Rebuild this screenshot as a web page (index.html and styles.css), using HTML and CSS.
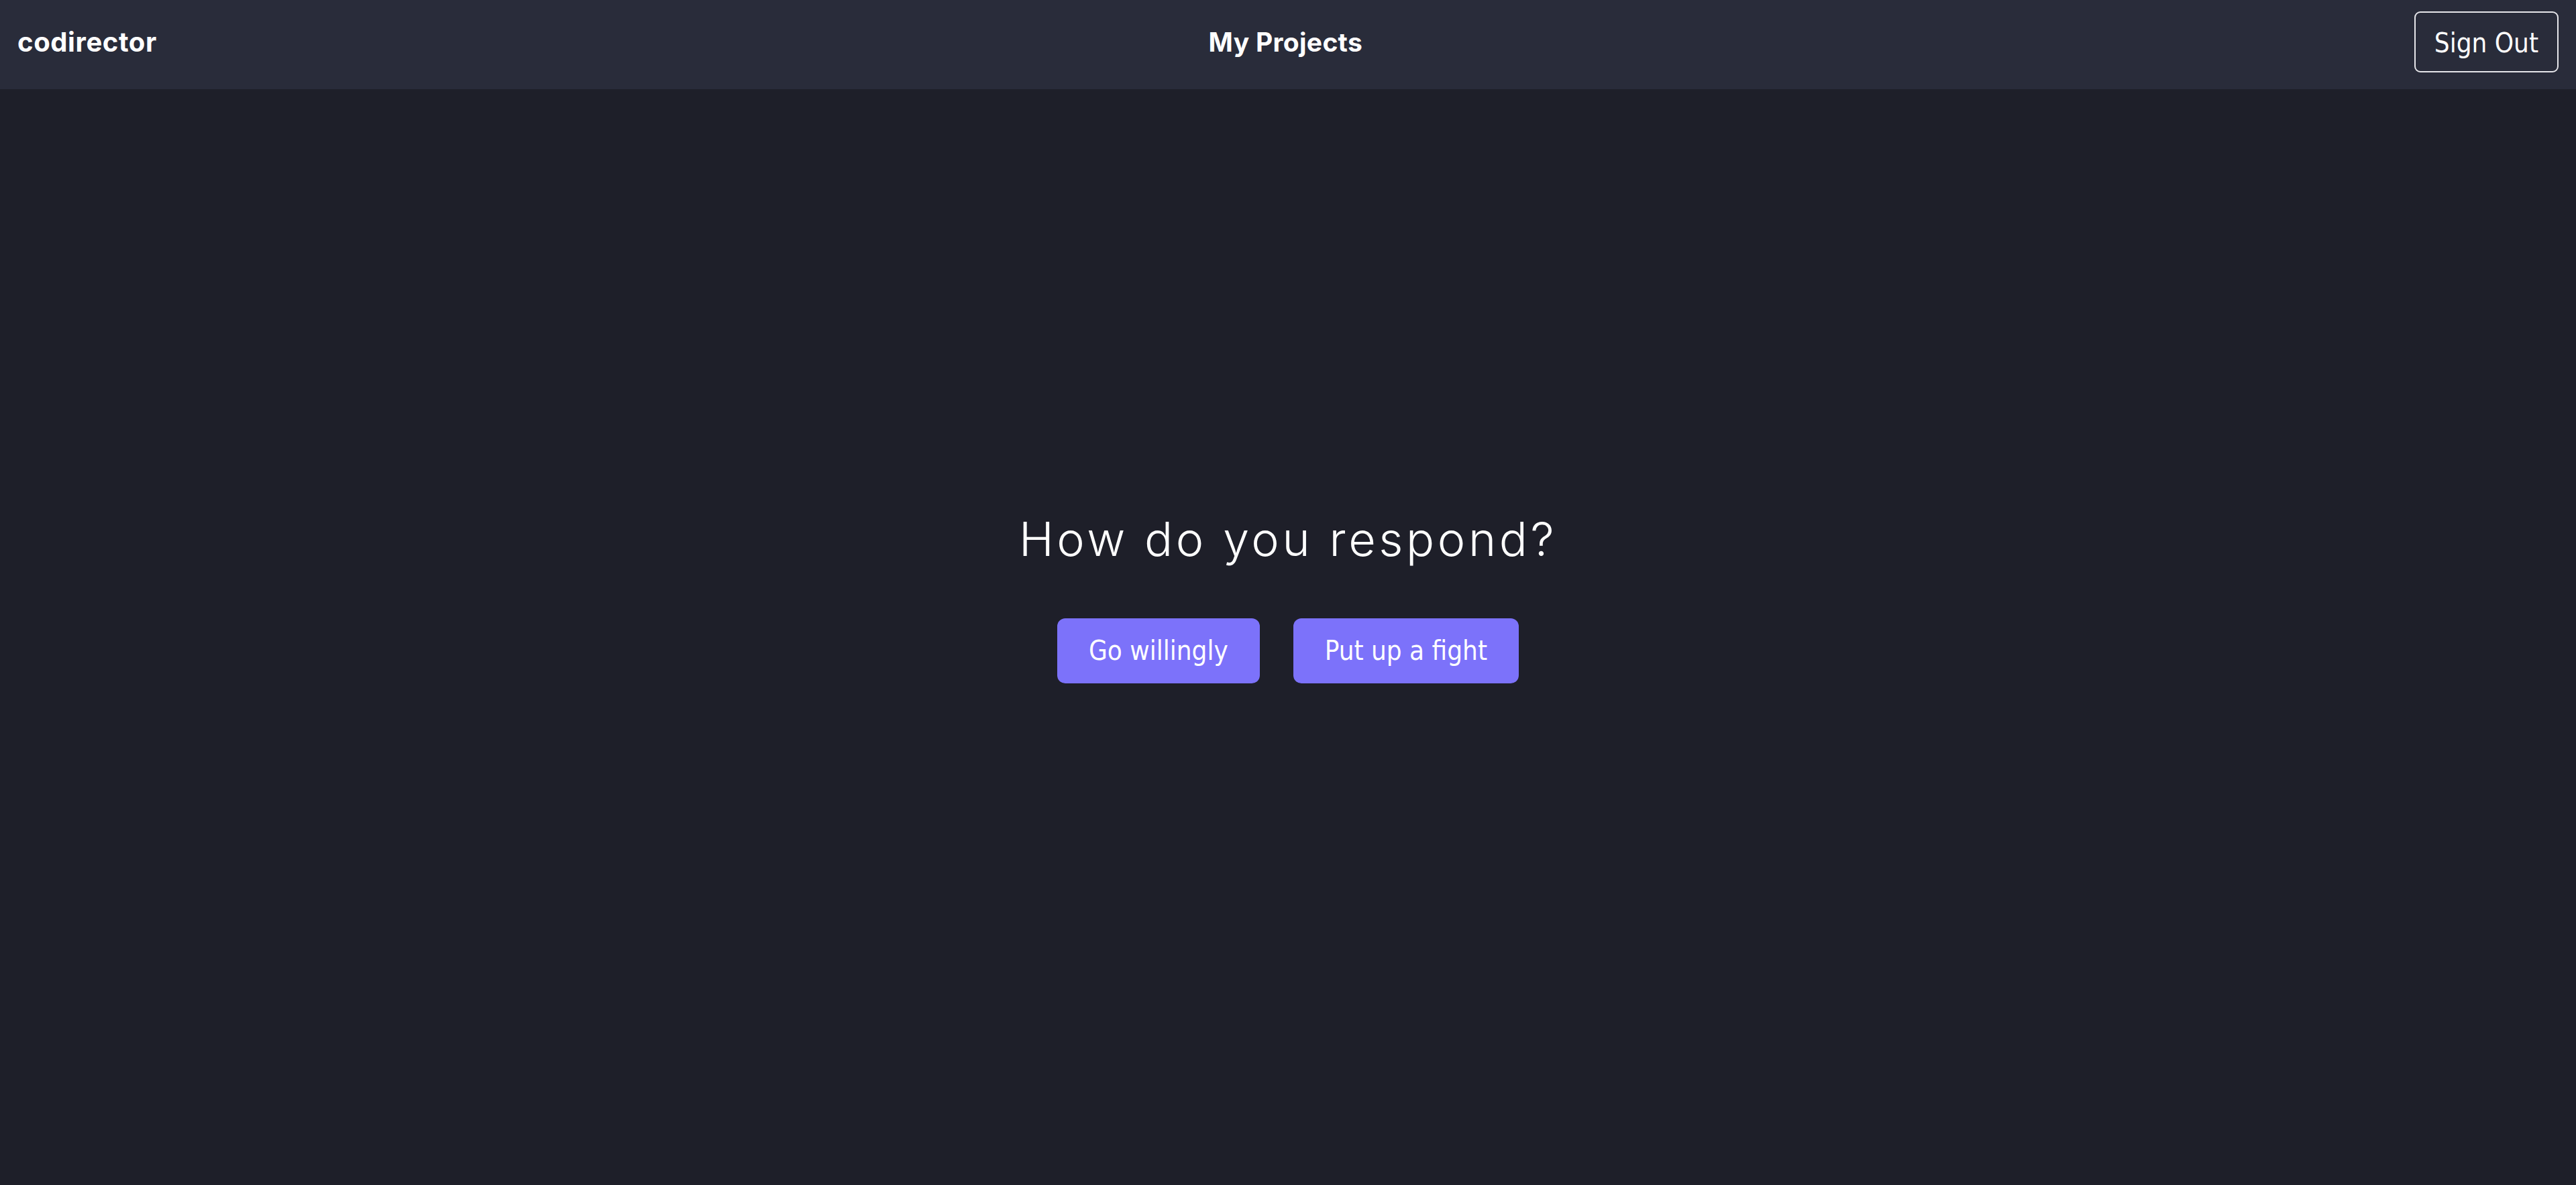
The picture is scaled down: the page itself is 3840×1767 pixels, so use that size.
FILE: index.html
```html
<!DOCTYPE html>
<html lang="en">
<head>
<meta charset="utf-8">
<title>codirector</title>
<link rel="stylesheet" href="styles.css">
</head>
<body>
<header class="topbar">
  <div class="brand">codirector</div>
  <div class="page-title">My Projects</div>
  <button class="signout">Sign Out</button>
</header>
<main class="stage">
  <h1 class="prompt">How do you respond?</h1>
  <div class="choices">
    <button class="choice">Go willingly</button>
    <button class="choice">Put up a fight</button>
  </div>
</main>
</body>
</html>
```
FILE: styles.css
```css
html, body {
  margin: 0;
  padding: 0;
}
body {
  background: #1e1f29;
  color: #ffffff;
  min-height: 100vh;
  display: flex;
  flex-direction: column;
  font-family: "Inter", "Liberation Sans", sans-serif;
}
.topbar {
  height: 133px;
  box-sizing: border-box;
  background: #292c3a;
  display: flex;
  align-items: center;
  justify-content: space-between;
  padding: 17px 26px 25px 26px;
}
.brand, .page-title {
  font-family: "Inter", "Liberation Sans", sans-serif;
  font-weight: 700;
  font-size: 39px;
  line-height: 47px;
  letter-spacing: 0.3px;
  color: #ffffff;
}
.brand {
  font-size: 40px;
  letter-spacing: 0.6px;
}
.signout {
  font-family: "DejaVu Sans Condensed", "DejaVu Sans", sans-serif;
  font-stretch: condensed;
  font-size: 40px;
  line-height: 47px;
  white-space: nowrap;
  color: #ffffff;
  background: transparent;
  border: 2px solid #e6e6ea;
  border-radius: 9px;
  padding: 22px 28px 18px 28px;
  height: 91px;
  box-sizing: border-box;
  cursor: pointer;
}
.stage {
  flex: 1;
  display: flex;
  flex-direction: column;
  align-items: center;
  justify-content: center;
  padding-bottom: 119px;
}
.prompt {
  margin: 0;
  font-family: "Inter", "Liberation Sans", sans-serif;
  font-weight: 300;
  font-size: 70px;
  line-height: 84px;
  letter-spacing: 4.6px;
  color: #ffffff;
}
.choices {
  display: flex;
  gap: 50px;
  margin-top: 76px;
}
.choice {
  font-family: "DejaVu Sans Condensed", "DejaVu Sans", sans-serif;
  font-stretch: condensed;
  font-size: 40px;
  line-height: 47px;
  white-space: nowrap;
  color: #ffffff;
  background: #7c72fa;
  border: none;
  border-radius: 12px;
  padding: 25px 47px;
  height: 97px;
  box-sizing: border-box;
  cursor: pointer;
}
```
